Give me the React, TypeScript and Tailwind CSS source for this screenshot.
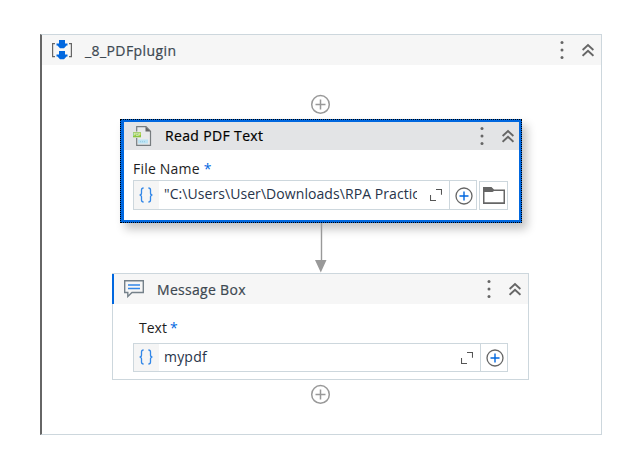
import React from "react";

const Dots = () => (
  <svg className="block h-5 w-1 shrink-0" viewBox="0 0 4 20" fill="#666">
    <circle cx="2" cy="2.5" r="1.5" />
    <circle cx="2" cy="10" r="1.5" />
    <circle cx="2" cy="17.5" r="1.5" />
  </svg>
);

const Chevrons = () => (
  <svg className="block h-[14px] w-3 shrink-0" viewBox="0 0 12 14" fill="none" stroke="#666" strokeWidth="1.9">
    <path d="M0.6 7 L6 2 L11.4 7 M0.6 12.8 L6 7.8 L11.4 12.8" />
  </svg>
);

const AddNode = () => (
  <svg className="block h-5 w-[21px]" viewBox="0 0 21 20" fill="none" stroke="#999" strokeWidth="1.5">
    <circle cx="10.5" cy="10.4" r="8.8" />
    <path d="M10.5 5.4v10M5.5 10.4h10" />
  </svg>
);

const PlusCell = () => (
  <div className="flex w-[27px] shrink-0 items-center justify-center border-l border-[#cdd7dd]">
    <svg className="mt-px ml-px block size-[18px]" viewBox="0 0 18 18" fill="none">
      <circle cx="9" cy="9" r="8" stroke="#666" strokeWidth="1.3" />
      <path d="M9 4.5v9M4.5 9h9" stroke="#0067df" strokeWidth="1.4" />
    </svg>
  </div>
);

const Expand = () => (
  <svg className="block h-3 w-3 shrink-0" viewBox="0 0 12 12" fill="none" stroke="#555" strokeWidth="1.1">
    <path d="M0.5 6v5.5h5.5M6 0.5h5.5v5.3" />
  </svg>
);

const Braces = () => (
  <div className="flex w-[25px] shrink-0 items-center justify-center bg-[#f5f5f5]">
    <svg className="-mt-px -ml-px block h-4 w-[14px]" viewBox="0 0 14 16" fill="none" stroke="#3287e8" strokeWidth="1.3">
      <path d="M4.6 1C2.8 1 2.5 1.5 2.5 3v3c0 1.2-.5 2-1.9 2 1.4 0 1.9.8 1.9 2v3c0 1.5.3 2 2.1 2M9.4 1c1.8 0 2.1.5 2.1 2v3c0 1.2.5 2 1.9 2-1.4 0-1.9.8-1.9 2v3c0 1.5-.3 2-2.1 2" />
    </svg>
  </div>
);

const ScopeIcon = () => (
  <svg className="block h-[22px] w-[22px] shrink-0" viewBox="0 0 22 22">
    <path d="M4 4.6H1.6v13H4M18 4.6h2.4v13H18" fill="none" stroke="#666" strokeWidth="1.2" />
    <path d="M8 1h6v3.5h2.5v2h-1L13 9.3H9L6.5 6.5h-1v-2H8zM8 12h6v3.5h2.5v2h-1L13 20.3H9l-2.500-2.800h-1v-2H8z" fill="#0067df" />
  </svg>
);

const PdfIcon = () => (
  <svg className="block h-5 w-[19px] shrink-0" viewBox="0 0 19 20">
    <path d="M3.700 5.500V.7h9.300l4.500 4.500v14.100H3.700V12" fill="#e9eaeb" stroke="#777d80" strokeWidth="1.2" />
    <path d="M12.500 .7v4.800h5.300z" fill="#666" />
    <rect y="6.300" width="8" height="5" fill="#8bc53f" />
    <text x="0.500" y="10.300" fontSize="3.600" fontWeight="bold" fill="#e7f4d8" fontFamily="Liberation Sans, sans-serif">PDF</text>
    <rect x="5" y="13.500" width="10" height="4" fill="#bce3f4" />
    <path d="M7 15.700h6" stroke="#94c9df" strokeDasharray="1 1" />
  </svg>
);

const MessageIcon = () => (
  <svg className="block h-[18px] w-5 shrink-0" viewBox="0 0 20 18" fill="none">
    <path d="M.7.8h18.600v11.700H8l-4.200 4v-4H.7z" stroke="#75818a" strokeWidth="1.400" />
    <path d="M4 5h12M4 8.400h12" stroke="#3287e8" strokeWidth="1.500" />
  </svg>
);

export default function App() {
  return (
    <div className="h-[468px] w-[644px] overflow-hidden bg-white pt-[34px] pl-10 font-['Open_Sans','Noto_Sans',sans-serif] text-[14px] leading-5 whitespace-nowrap text-[#1e1e1e]">
      <div className="flex h-[401px] w-[562px] flex-col border border-l-2 border-[#cdd7dd] border-l-[#666]">
        <header className="flex h-[30px] shrink-0 items-center bg-[#f6f6f6] pr-[7px] pl-[9px]">
          <ScopeIcon />
          <span className="ml-3 pt-px tracking-[0.42px] text-[#3d4851] [-webkit-text-stroke:0.2px]">_8_PDFplugin</span>
          <span className="ml-auto flex items-center gap-[18.5px]">
            <Dots />
            <Chevrons />
          </span>
        </header>
        <div className="flex flex-col">
          <div className="mt-[29px] ml-[268px]"><AddNode /></div>

          <section className="mt-[5px] ml-[78px] h-[104px] w-[402px] border border-dotted border-black bg-[#0067df] pt-[2px] pr-[2px] pb-[2px] pl-[3px] shadow-[5px_6px_9px_rgba(0,0,0,0.24)]">
            <div className="h-full bg-white">
              <header className="flex h-7 items-center bg-[#e3e4e6] pr-[5px] pl-[9px]">
                <PdfIcon />
                <span className="ml-[13px] tracking-[0.35px] text-black [-webkit-text-stroke:0.2px]">Read PDF Text</span>
                <span className="ml-auto flex items-center gap-[18.5px]">
                  <Dots />
                  <Chevrons />
                </span>
              </header>
              <div className="mt-[9px] ml-[9px] flex">
                <span className="tracking-[0.2px]">File Name</span>
                <span className="ml-[4px] text-[#0067df]">*</span>
              </div>
              <div className="mt-px ml-[9px] flex items-end gap-[2px]">
                <div className="flex h-[30px] w-[344px] border border-[#cdd7dd]">
                  <Braces />
                  <span className="-mt-[2px] ml-[5px] w-[253px] self-center overflow-hidden tracking-[0.07px] text-[#27344a]">"C:\Users\User\Downloads\RPA Practice</span>
                  <span className="-mt-px ml-[13px] self-center"><Expand /></span>
                  <span className="ml-auto flex"><PlusCell /></span>
                </div>
                <div className="flex h-[29px] w-[29px] items-center justify-center border border-[#cdd7dd]">
                  <svg className="block h-[17px] w-[22px]" viewBox="0 0 22 17">
                    <path d="M0 0h8.500l2.500 2.500h11V17H0z" fill="#666" />
                    <path d="M1.500 5h8l1.500-1h9.500v11.200h-19z" fill="white" />
                  </svg>
                </div>
              </div>
            </div>
          </section>

          <svg className="ml-[273px] block h-[50px] w-3" viewBox="0 0 12 50" fill="#999">
            <path d="M5.800 0h1.400v38H5.800zM0 37h11.500L5.800 49.500z" />
          </svg>

          <section className="ml-[70px] h-[107px] w-[417px] border border-[#cdd7dd]">
            <header className="-ml-px flex h-[30px] items-center border-l-2 border-[#0067df] bg-[#f6f6f6] pr-[7px] pl-[10px]">
              <MessageIcon />
              <span className="ml-[13px] pt-px tracking-[0.3px] text-[#3d4851] [-webkit-text-stroke:0.2px]">Message Box</span>
              <span className="ml-auto flex items-center gap-[18.5px]">
                <Dots />
                <Chevrons />
              </span>
            </header>
            <div className="mt-[14px] ml-[26px] flex">
              Text<span className="ml-[3px] text-[#0067df]">*</span>
            </div>
            <div className="mt-[5px] ml-5 flex h-[29px] w-[375px] border border-[#cdd7dd]">
              <Braces />
              <span className="-mt-[2px] ml-[5px] w-[253px] self-center tracking-[0.2px] text-[#27344a]">mypdf</span>
              <span className="ml-[44px] self-center"><Expand /></span>
              <span className="ml-auto flex"><PlusCell /></span>
            </div>
          </section>
          <div className="mt-[4px] ml-[268px]"><AddNode /></div>
        </div>
      </div>
    </div>
  );
}
